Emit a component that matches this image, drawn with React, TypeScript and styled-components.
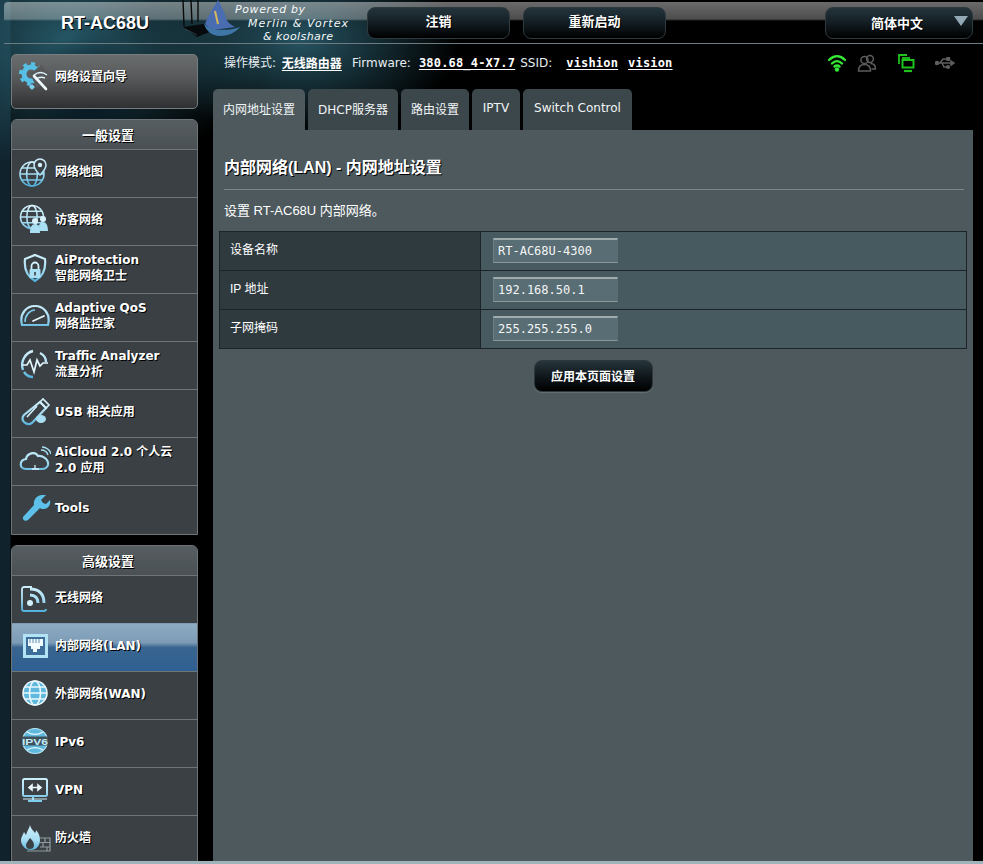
import React from "react";
import styled, { createGlobalStyle } from "styled-components";

const SANS = `"Liberation Sans", "Noto Sans CJK SC", sans-serif`;
const NAV = `"DejaVu Sans", "Noto Sans CJK SC", sans-serif`;
const MONO = `"DejaVu Sans Mono", "Noto Sans CJK SC", monospace`;

const GlobalStyle = createGlobalStyle`
  html, body { margin: 0; padding: 0; background: #000; }
  * { box-sizing: border-box; }
`;

const Page = styled.div`
  width: 983px;
  height: 864px;
  overflow: hidden;
  display: flex;
  flex-direction: column;
  color: #fff;
  font-family: ${SANS};
  background:
    radial-gradient(ellipse 60px 70px at 90px 100px, rgba(8, 26, 36, 0.95), rgba(8, 26, 36, 0) 100%),
    radial-gradient(ellipse 160px 95px at 300px 40px, rgba(42, 92, 108, 0.9), rgba(42, 92, 108, 0) 100%),
    radial-gradient(ellipse 200px 130px at 70px 40px, rgba(40, 92, 108, 0.95), rgba(40, 92, 108, 0) 100%),
    linear-gradient(90deg, #10232d 0, #10232d 10px, #000 11px);
`;

const Header = styled.header`
  height: 42px;
  margin: 2px 0 0 4px;
  flex: none;
  display: flex;
  align-items: flex-start;
  padding-right: 10px;
  border-top-left-radius: 4px;
  border-bottom: 1px solid #6d7c82;
  background: linear-gradient(180deg, rgba(255, 255, 255, 0.42) 0, rgba(255, 255, 255, 0.3) 17px, rgba(255, 255, 255, 0) 19px);
`;

const ModelName = styled.div`
  width: 174px;
  padding: 12px 0 0 57px;
  font-size: 18px;
  line-height: 18px;
  font-weight: bold;
  white-space: nowrap;
  text-shadow: 1px 1px 0 #000;
`;

const LogoSvg = styled.svg`
  width: 189px;
  height: 42px;
  flex: none;
  overflow: visible;
`;

const LogoText = styled.text`
  font-family: "DejaVu Sans", sans-serif;
  font-style: italic;
  font-size: 11px;
  fill: #f4f8f8;
`;

const HeadButton = styled.div<{ $wide?: boolean }>`
  width: ${(p) => (p.$wide ? 148 : 143)}px;
  height: 32px;
  margin: 5px 0 0 ${(p) => (p.$wide ? "auto" : "0")};
  display: flex;
  align-items: center;
  justify-content: ${(p) => (p.$wide ? "flex-start" : "center")};
  gap: 31px;
  padding: ${(p) => (p.$wide ? "0 0 2px 45px" : "0 0 5px")};
  border: 1px solid #2f3a3f;
  border-radius: 8px;
  font-size: 13px;
  font-weight: bold;
  background: linear-gradient(180deg, #24343c 0%, #152026 45%, #000 100%);
  text-shadow: 1px 1px 0 #000;
`;

const ButtonGap = styled.div`
  width: 13px;
  flex: none;
`;

const Arrow = styled.span`
  width: 0;
  height: 0;
  margin-top: -3px;
  border-left: 7px solid transparent;
  border-right: 7px solid transparent;
  border-top: 10px solid #93aab6;
`;

const Body = styled.div`
  flex: 1;
  min-height: 0;
  display: flex;
  gap: 15px;
  padding-left: 11px;
  overflow: hidden;
`;

const Sidebar = styled.nav`
  width: 187px;
  flex: none;
  padding-top: 10px;
  display: flex;
  flex-direction: column;
  gap: 10px;
`;

const Wizard = styled.div`
  height: 55px;
  flex: none;
  display: flex;
  align-items: center;
  gap: 4px;
  padding: 0 0 9px 7px;
  border: 1px solid #767c80;
  border-radius: 5px;
  background: linear-gradient(180deg, #6a6d6e 0%, #565859 45%, #2f3031 100%);
`;

const NavGroup = styled.section`
  flex: none;
  padding-bottom: 1px;
  border: 1px solid #6e7478;
  border-top-left-radius: 6px;
  border-top-right-radius: 6px;
  background: #3a4044;
  overflow: hidden;
`;

const GroupTitle = styled.div`
  height: 29px;
  display: flex;
  align-items: center;
  justify-content: center;
  padding: 0 0 1px 7px;
  font-size: 13px;
  font-weight: bold;
  text-shadow: 1px 1px 0 #000;
  font-family: "Noto Sans CJK SC", sans-serif;
  background: linear-gradient(180deg, #575e62 0%, #4a5054 100%);
`;

const NavItem = styled.div<{ $active?: boolean }>`
  height: 48px;
  display: flex;
  align-items: center;
  gap: 4px;
  padding: 0 0 4px 7px;
  border-top: 1px solid ${(p) => (p.$active ? "#7f9ab2" : "#6e7478")};
  background: ${(p) =>
    p.$active ? "linear-gradient(180deg, #8fabc4 0%, #7c9bb5 40%, #39658f 50%, #2f5f92 100%)" : "transparent"};
`;

const NavLabel = styled.div`
  font-family: ${NAV};
  font-size: 12px;
  line-height: 16px;
  font-weight: bold;
  white-space: pre-line;
  text-shadow: 1px 1px 0 #000;
`;

const Main = styled.main`
  width: 760px;
  flex: none;
  display: flex;
  flex-direction: column;
`;

const StatusRow = styled.div`
  height: 45px;
  flex: none;
  display: flex;
  align-items: flex-start;
  padding: 11px 18px 0 11px;
  font-family: ${NAV};
  font-size: 12px;
  line-height: 16px;
  color: #e8eef0;
`;

const StatusLabel = styled.span<{ $gap?: number }>`
  white-space: pre;
  margin-left: ${(p) => p.$gap ?? 0}px;
`;

const StatusLink = styled.span<{ $cjk?: boolean; $gap?: number }>`
  font-family: ${(p) => (p.$cjk ? `"Noto Sans CJK SC", sans-serif` : MONO)};
  font-weight: bold;
  font-size: 12px;
  letter-spacing: ${(p) => (p.$cjk ? "0" : "0.18px")};
  color: #fff;
  text-decoration: underline;
  text-underline-offset: 2px;
  white-space: pre;
  margin-left: ${(p) => p.$gap ?? 0}px;
`;

const StatusIcons = styled.div`
  margin-left: auto;
  margin-top: -2px;
  display: flex;
  gap: 19px;
`;

const StatusPair = styled.div`
  display: flex;
  gap: 10px;
`;

const Tabs = styled.div`
  height: 41px;
  flex: none;
  display: flex;
  gap: 3px;
`;

const Tab = styled.div<{ $active?: boolean; $w: number }>`
  width: ${(p) => p.$w}px;
  display: flex;
  align-items: center;
  justify-content: center;
  padding-bottom: 3px;
  font-family: ${NAV};
  font-size: 12px;
  color: #f2f5f6;
  border-radius: 5px 5px 0 0;
  background: ${(p) => (p.$active ? "#4d595d" : "#3c474c")};
`;

const Panel = styled.div`
  flex: 1;
  background: #4d595d;
  padding: 28px 6px 0;
`;

const Title = styled.h1`
  margin: 0 3px 0 5px;
  font-size: 16px;
  line-height: 20px;
  font-weight: bold;
  padding-bottom: 11px;
  border-bottom: 1px solid #7b8689;
  text-shadow: 1px 1px 0 #000;
`;

const Desc = styled.p`
  margin: 13px 5px 12px;
  font-size: 13px;
  line-height: 16px;
  color: #fff;
`;

const Form = styled.div`
  border: 1px solid #1d2427;
  border-bottom: 0;
  width: 748px;
`;

const FormRow = styled.div`
  height: 39px;
  display: flex;
  border-bottom: 1px solid #1d2427;
`;

const FormLabel = styled.div`
  width: 261px;
  flex: none;
  display: flex;
  align-items: center;
  padding: 0 0 6px 10px;
  font-size: 12px;
  background: #2f3a3f;
  border-right: 1px solid #1d2427;
`;

const FormCell = styled.div`
  flex: 1;
  display: flex;
  align-items: center;
  padding: 0 0 1px 12px;
  background: #475a5f;
`;

const Field = styled.div`
  width: 125px;
  height: 25px;
  display: flex;
  align-items: center;
  padding-left: 4px;
  font-family: ${MONO};
  font-size: 12px;
  color: #f4f6f6;
  background: #596d74;
  border: 1px solid #8a989c;
  border-top: 2px solid #a0abae;
  border-left-color: #6f7f84;
  border-right-color: #596d74;
`;

const Actions = styled.div`
  display: flex;
  justify-content: center;
  margin-top: 11px;
`;

const ApplyButton = styled.div`
  width: 119px;
  height: 32px;
  display: flex;
  align-items: center;
  justify-content: center;
  padding-bottom: 1px;
  font-size: 12px;
  font-weight: bold;
  font-family: "Noto Sans CJK SC", sans-serif;
  border: 1px solid #2e383c;
  border-radius: 8px;
  background: linear-gradient(180deg, #26343b 0%, #10181c 50%, #000 100%);
  box-shadow: 0 1px 1px rgba(255, 255, 255, 0.15);
`;

const FooterStrip = styled.div`
  height: 3px;
  flex: none;
  background: #9fb4ba;
`;

const IconSvg = styled.svg<{ $size?: number }>`
  width: ${(p) => p.$size ?? 32}px;
  height: ${(p) => p.$size ?? 32}px;
  flex: none;
`;

const STROKE = "url(#navInk)";

const Ink = () => (
  <defs>
    <linearGradient id="navInk" gradientUnits="userSpaceOnUse" x1="0" y1="2" x2="0" y2="30">
      <stop offset="0" stopColor="#d2f0fb" />
      <stop offset="0.55" stopColor="#a9def3" />
      <stop offset="1" stopColor="#4dafdb" />
    </linearGradient>
  </defs>
);

const globe = (cx: number, cy: number, r: number) => (
  <g fill="none" stroke={STROKE} strokeWidth="1.6">
    <circle cx={cx} cy={cy} r={r} />
    <ellipse cx={cx} cy={cy} rx={r * 0.45} ry={r} />
    <path d={`M${cx - r} ${cy}H${cx + r}M${cx - r * 0.85} ${cy - r * 0.5}H${cx + r * 0.85}M${cx - r * 0.85} ${cy + r * 0.5}H${cx + r * 0.85}`} />
  </g>
);

const ICONS: Record<string, React.ReactNode> = {
  wizard: (
    <g>
      <circle cx="12" cy="13" r="7" fill="none" stroke="#58bfe6" strokeWidth="5" />
      <circle cx="12" cy="13" r="10.500" fill="none" stroke="#58bfe6" strokeWidth="3" strokeDasharray="4 4.200" />
      <path d="M11 13L22 4L32 14L18 27z" fill="#565859" />
      <path d="M15 14c4-3 9-3 13 0M17 18c3-2 6-2 9-1" fill="none" stroke="#dff4fb" strokeWidth="1.500" />
      <path d="M15 15l12 13" stroke="#eef9fd" strokeWidth="2.600" strokeLinecap="round" />
      <path d="M13 23l3 3-3 3-3-3z" fill="#7fd0ee" />
    </g>
  ),
  map: (
    <g>
      {globe(13, 18, 12)}
      <path d="M21 3a6 6 0 0 1 6 6c0 4-6 10-6 10s-6-6-6-10a6 6 0 0 1 6-6z" fill="#3a4044" stroke={STROKE} strokeWidth="1.6" />
      <circle cx="21" cy="9" r="2.2" fill="#d2f0fb" />
    </g>
  ),
  guest: (
    <g>
      {globe(13, 13, 11.5)}
      <circle cx="16" cy="17" r="3" fill="#d7f1fb" />
      <circle cx="24" cy="15" r="3" fill="#d7f1fb" />
      <path d="M11 29c0-6 2-9 5-9s5 3 5 9zM20 27c0-6 1-9 4-9s5 3 5 9z" fill="#a9def3" />
    </g>
  ),
  shield: (
    <g>
      <path d="M16 3l10 4c1 9-1 17-10 22C7 24 5 16 6 7z" fill="none" stroke={STROKE} strokeWidth="2.2" />
      <path d="M12.5 17v-3a3.5 3.5 0 0 1 7 0v3" fill="none" stroke="#d2f0fb" strokeWidth="1.8" />
      <rect x="10.5" y="17" width="11" height="9" rx="1" fill="#a9def3" />
      <rect x="15.2" y="20" width="1.6" height="3.5" fill="#3a4044" />
    </g>
  ),
  qos: (
    <g fill="none">
      <path d="M3 25c-3-12 5-19 13-19s16 7 13 19z" stroke={STROKE} strokeWidth="2.2" />
      <path d="M6 22c0-7 5-12 10-12" stroke="#7fcdec" strokeWidth="1.6" />
      <path d="M14 21l11-5" stroke="#e6f7fd" strokeWidth="1.8" strokeLinecap="round" />
    </g>
  ),
  traffic: (
    <g fill="none">
      <path d="M4 22C1 14 6 5 14 3M14 29c-4 0-7-2-9-5M21 5c4 2 6 6 6 9" stroke={STROKE} strokeWidth="2.4" />
      <path d="M3 17h5l3-5 4 12 3-12 3 6 3-3h5" stroke="#e2f6fd" strokeWidth="1.7" />
    </g>
  ),
  usb: (
    <g>
      <path d="M21 6l6 6-14 15c-3 2-6 1-8-1s-2-5 0-7z" fill="none" stroke={STROKE} strokeWidth="2.2" />
      <path d="M21 6l3-3 6 6-3 3z" fill="none" stroke="#d2f0fb" strokeWidth="1.6" />
      <path d="M8 21l10-11" stroke="#d2f0fb" strokeWidth="1.6" />
      <ellipse cx="22" cy="23" rx="5" ry="4" fill="#a9def3" />
    </g>
  ),
  cloud: (
    <g fill="none">
      <path d="M7 25c-7 0-7-9 0-10 1-6 9-8 12-3 5-1 11 4 10 9-1 3-3 4-6 4z" stroke={STROKE} strokeWidth="2.2" />
      <path d="M22 6c3 0 6 2 7 5M23 3c4 0 8 3 9 7" stroke="#a9def3" strokeWidth="1.5" />
      <path d="M13 25h7M16 21v4" stroke="#d2f0fb" strokeWidth="1.3" />
    </g>
  ),
  tools: (
    <path
      d="M27 3l-5 5 2 3 3 1 4-4c1 5-2 9-7 9-1 0-2 0-3-1L9 28c-2 2-6 0-5-3l11-12c-1-5 3-10 8-10z"
      fill="#5cc0e8"
    />
  ),
  wireless: (
    <g fill="none">
      <path d="M13 5H5a2 2 0 0 0-2 2v20a2 2 0 0 0 2 2h20a2 2 0 0 0 2-2" stroke={STROKE} strokeWidth="1.8" />
      <circle cx="11" cy="21" r="3" fill="#d2f0fb" />
      <path d="M11 13c5 0 8 3 8 8M11 7c9 0 14 5 14 14" stroke={STROKE} strokeWidth="3" />
    </g>
  ),
  lan: (
    <g>
      <rect x="4" y="4" width="25" height="24" fill="#b2e4f6" />
      <rect x="7" y="7" width="19" height="18" fill="#3e6f9a" />
      <path d="M9 9h15v7h-3v3h-3v3h-4v-3h-2v-3H9z" fill="#f2fbfe" />
      <path d="M11 9v4M14 9v4M17 9v4M20 9v4" stroke="#5f8db3" strokeWidth="1" />
    </g>
  ),
  wan: (
    <g>
      <circle cx="16" cy="15" r="12" fill="#5fb9df" />
      <g fill="none" stroke="#eaf8fd" strokeWidth="1.6">
        <circle cx="16" cy="15" r="12" />
        <ellipse cx="16" cy="15" rx="5.5" ry="12" />
        <path d="M4 15h24M6 9h20M6 21h20" />
      </g>
    </g>
  ),
  ipv6: (
    <g>
      <circle cx="16" cy="15" r="12.5" fill="#5fb9df" stroke="#b6e5f6" strokeWidth="1.2" />
      <path d="M8 6c5 3 11 3 16 0M8 24c5-3 11-3 16 0" fill="none" stroke="#e6f7fd" strokeWidth="1.4" />
      <rect x="2" y="10.5" width="28" height="9" fill="#3a4044" opacity="0.85" />
      <text x="16" y="18.7" textAnchor="middle" fontSize="9.5" fontWeight="bold" fontFamily="Liberation Sans Narrow, Liberation Sans, sans-serif" fill="#c2ecfa" textLength="26" lengthAdjust="spacingAndGlyphs">
        IPV6
      </text>
    </g>
  ),
  vpn: (
    <g fill="none">
      <rect x="4" y="5" width="24" height="17" rx="1.5" stroke={STROKE} strokeWidth="2" />
      <path d="M10 13.5h12M10 13.5l3-2.5v5zM22 13.5l-3-2.5v5z" stroke="#eaf8fd" strokeWidth="1.6" fill="#eaf8fd" />
      <path d="M14 23v3M9 27h14" stroke="#7fcdec" strokeWidth="2.2" />
      <path d="M4 25h24" stroke="#d2f0fb" strokeWidth="1" />
    </g>
  ),
  firewall: (
    <g>
      <path d="M11 3c1 4 3 5 5 8 1-1 1-2 1-3 3 3 4 7 4 10 0 6-4 10-9 10S2 24 2 18c0-3 2-5 3-8 1 1 1 2 2 3 1-4 3-6 4-10z" fill="url(#navInk)" />
      <path d="M11 16c2 2 4 4 4 7a4 4 0 0 1-8 0c0-2 2-4 4-7z" fill="#3a4044" />
      <path d="M21 16h10v13H8M21 20.5h10M21 25h10M26 16v4.5M24 20.5V25M28 25v4" fill="none" stroke="#8f9ba0" strokeWidth="1.2" />
    </g>
  ),
};

const NavIcon = ({ name }: { name: string }) => (
  <IconSvg viewBox="0 0 32 32">
    <Ink />
    {ICONS[name]}
  </IconSvg>
);

const WifiIcon = () => (
  <IconSvg $size={20} viewBox="0 0 20 20" fill="none" stroke="#35e835" strokeWidth="2.4" strokeLinecap="round">
    <path d="M2 7c5-5 11-5 16 0M5 10.5c3-3 7-3 10 0M7.5 13.5c1.500-1.200 3.500-1.200 5 0" />
    <circle cx="10" cy="16.500" r="2.200" fill="#35e835" stroke="none" />
  </IconSvg>
);

const PeopleIcon = () => (
  <IconSvg $size={20} viewBox="0 0 20 20" fill="none" stroke="#5c5c5c" strokeWidth="1.5">
    <circle cx="7.500" cy="7" r="3.600" />
    <circle cx="13" cy="6" r="3.400" />
    <path d="M1.500 18c0-4 2-6.500 6-6.500s6 2.500 6 6.500zM13.500 10.500c3 0 5 2.200 5 5.500h-4" />
  </IconSvg>
);

const MonitorIcon = () => (
  <IconSvg $size={20} viewBox="0 0 20 20" fill="none" stroke="#1fc21f" strokeWidth="1.8">
    <path d="M11 2H3v9" />
    <path d="M14 5H6" />
    <rect x="6.500" y="7" width="11" height="7.500" strokeWidth="2" />
    <path d="M8 18h8" strokeWidth="2.200" />
  </IconSvg>
);

const UsbIcon = () => (
  <IconSvg $size={20} viewBox="0 0 20 20" fill="none" stroke="#5f5f5f" strokeWidth="1.500">
    <path d="M1 10h16" />
    <circle cx="2" cy="10" r="1.500" fill="#5f5f5f" />
    <path d="M16 8l3 2-3 2z" fill="#5f5f5f" />
    <path d="M5 10l3-4h4M7 10l2 4h3" />
    <rect x="12" y="4.800" width="2.400" height="2.400" fill="#5f5f5f" />
    <circle cx="13" cy="14" r="1.300" fill="#5f5f5f" />
  </IconSvg>
);

const Logo = () => (
  <LogoSvg viewBox="0 0 189 42">
    <g fill="none" stroke="#0a0a0a" strokeWidth="1.4">
      <path d="M5 -2l1 26M13 -2l1 24M20 -2l0 22" />
    </g>
    <path d="M5 25l20-3 12 6-18 7z" fill="#070a0c" />
    <path d="M7 27l12 6" stroke="#39505a" strokeWidth="0.8" />
    <path d="M40 -2c-4 7-10 16-13 24 4 5 10 6 16 5l14-2c-5-3-8-5-9-9-2-7-5-12-8-18z" fill="#4a6cb0" />
    <path d="M37 9l3 13" stroke="#d8b65a" strokeWidth="2" />
    <path d="M26 22c6 6 22 8 36 3-4 5-11 9-20 9-8 0-14-5-16-12z" fill="#3f76a8" />
    <LogoText x="57" y="11" textLength="70" lengthAdjust="spacing">Powered by</LogoText>
    <LogoText x="70" y="25" textLength="100" lengthAdjust="spacing">Merlin &amp; Vortex</LogoText>
    <LogoText x="85" y="38" textLength="70" lengthAdjust="spacing">&amp; koolshare</LogoText>
  </LogoSvg>
);

const GENERAL = [
  { icon: "map", label: "网络地图" },
  { icon: "guest", label: "访客网络" },
  { icon: "shield", label: "AiProtection\n智能网络卫士" },
  { icon: "qos", label: "Adaptive QoS\n网络监控家" },
  { icon: "traffic", label: "Traffic Analyzer\n流量分析" },
  { icon: "usb", label: "USB 相关应用" },
  { icon: "cloud", label: "AiCloud 2.0 个人云\n2.0 应用" },
  { icon: "tools", label: "Tools" },
];

const ADVANCED = [
  { icon: "wireless", label: "无线网络" },
  { icon: "lan", label: "内部网络(LAN)", active: true },
  { icon: "wan", label: "外部网络(WAN)" },
  { icon: "ipv6", label: "IPv6" },
  { icon: "vpn", label: "VPN" },
  { icon: "firewall", label: "防火墙" },
];

const TABS = [
  { label: "内网地址设置", w: 92, active: true },
  { label: "DHCP服务器", w: 90 },
  { label: "路由设置", w: 68 },
  { label: "IPTV", w: 48 },
  { label: "Switch Control", w: 109 },
];

const FIELDS = [
  { label: "设备名称", value: "RT-AC68U-4300" },
  { label: "IP 地址", value: "192.168.50.1" },
  { label: "子网掩码", value: "255.255.255.0" },
];

type Item = { icon: string; label: string; active?: boolean };

const Group = ({ title, items }: { title: string; items: Item[] }) => (
  <NavGroup>
    <GroupTitle>{title}</GroupTitle>
    {items.map((it) => (
      <NavItem key={it.icon} $active={it.active}>
        <NavIcon name={it.icon} />
        <NavLabel>{it.label}</NavLabel>
      </NavItem>
    ))}
  </NavGroup>
);

const App: React.FC = () => {
  return (
    <Page>
      <GlobalStyle />
      <Header>
        <ModelName>RT-AC68U</ModelName>
        <Logo />
        <HeadButton>注销</HeadButton>
        <ButtonGap />
        <HeadButton>重新启动</HeadButton>
        <HeadButton $wide>
          简体中文
          <Arrow />
        </HeadButton>
      </Header>
      <Body>
        <Sidebar>
          <Wizard>
            <NavIcon name="wizard" />
            <NavLabel>网络设置向导</NavLabel>
          </Wizard>
          <Group title="一般设置" items={GENERAL} />
          <Group title="高级设置" items={ADVANCED} />
        </Sidebar>
        <Main>
          <StatusRow>
            <StatusLabel>操作模式: </StatusLabel>
            <StatusLink $cjk $gap={2}>无线路由器</StatusLink>
            <StatusLabel $gap={10}>Firmware:</StatusLabel>
            <StatusLink $gap={8}>380.68_4-X7.7</StatusLink>
            <StatusLabel $gap={5}>SSID:</StatusLabel>
            <StatusLink $gap={14}>vishion</StatusLink>
            <StatusLink $gap={10}>vision</StatusLink>
            <StatusIcons>
              <StatusPair>
                <WifiIcon />
                <PeopleIcon />
              </StatusPair>
              <MonitorIcon />
              <UsbIcon />
            </StatusIcons>
          </StatusRow>
          <Tabs>
            {TABS.map((t) => (
              <Tab key={t.label} $w={t.w} $active={t.active}>
                {t.label}
              </Tab>
            ))}
          </Tabs>
          <Panel>
            <Title>内部网络(LAN) - 内网地址设置</Title>
            <Desc>设置 RT-AC68U 内部网络。</Desc>
            <Form>
              {FIELDS.map((f) => (
                <FormRow key={f.label}>
                  <FormLabel>{f.label}</FormLabel>
                  <FormCell>
                    <Field>{f.value}</Field>
                  </FormCell>
                </FormRow>
              ))}
            </Form>
            <Actions>
              <ApplyButton>应用本页面设置</ApplyButton>
            </Actions>
          </Panel>
        </Main>
      </Body>
      <FooterStrip />
    </Page>
  );
};

export default App;
